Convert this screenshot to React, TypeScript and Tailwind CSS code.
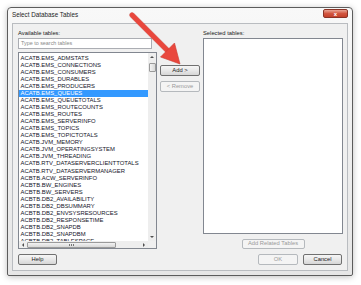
import React from "react";

const tables = [
  "ACATB.EMS_ADMSTATS",
  "ACATB.EMS_CONNECTIONS",
  "ACATB.EMS_CONSUMERS",
  "ACATB.EMS_DURABLES",
  "ACATB.EMS_PRODUCERS",
  "ACATB.EMS_QUEUES",
  "ACATB.EMS_QUEUETOTALS",
  "ACATB.EMS_ROUTECOUNTS",
  "ACATB.EMS_ROUTES",
  "ACATB.EMS_SERVERINFO",
  "ACATB.EMS_TOPICS",
  "ACATB.EMS_TOPICTOTALS",
  "ACATB.JVM_MEMORY",
  "ACATB.JVM_OPERATINGSYSTEM",
  "ACATB.JVM_THREADING",
  "ACATB.RTV_DATASERVERCLIENTTOTALS",
  "ACATB.RTV_DATASERVERMANAGER",
  "ACBTB.ACW_SERVERINFO",
  "ACBTB.BW_ENGINES",
  "ACBTB.BW_SERVERS",
  "ACBTB.DB2_AVAILABILITY",
  "ACBTB.DB2_DBSUMMARY",
  "ACBTB.DB2_ENVSYSRESOURCES",
  "ACBTB.DB2_RESPONSETIME",
  "ACBTB.DB2_SNAPDB",
  "ACBTB.DB2_SNAPDBM",
  "ACBTB.DB2_TABLESPACE",
];

const font = { fontFamily: '"Liberation Sans", Arial, sans-serif' };

function WinButton({
  label,
  disabled = false,
  className = "",
}: {
  label: string;
  disabled?: boolean;
  className?: string;
}) {
  return (
    <div
      className={`flex items-center justify-center rounded-[2px] border text-[5.8px] leading-none ${
        disabled
          ? "border-[#b5b9bd] bg-[#f4f4f4] text-[#9a9a9a]"
          : "border-[#707070] bg-gradient-to-b from-[#f6f6f6] via-[#e8e8e8] to-[#d6d6d6] text-[#1a1a1a]"
      } ${className}`}
    >
      {label}
    </div>
  );
}

function TableList() {
  return (
    <div className="mt-[3px] flex h-[197px] flex-col border border-[#828790] bg-white">
      <div className="flex min-h-0 flex-1">
        {/* rows */}
        <div className="flex-1 overflow-hidden pt-[1.5px]">
          {tables.map((t) => (
            <div
              key={t}
              className={`h-[7.07px] whitespace-nowrap pl-[1.5px] text-[5.9px] leading-[7.07px] ${
                t === "ACATB.EMS_QUEUES" ? "bg-[#3399ff] text-white" : "text-[#14142a]"
              }`}
            >
              {t}
            </div>
          ))}
        </div>
        {/* vertical scrollbar */}
        <div className="flex w-[8px] flex-col bg-[#eeeeee]">
          <div className="flex h-[8px] items-center justify-center">
            <div className="h-0 w-0 border-x-[2px] border-b-[2px] border-x-transparent border-b-[#505050]" />
          </div>
          <div className="mx-[0.5px] mt-[2px] h-[9px] rounded-[1px] border border-[#9a9a9a] bg-gradient-to-r from-[#f3f3f3] to-[#d8d8d8]" />
          <div className="flex-1" />
          <div className="flex h-[8px] items-center justify-center">
            <div className="h-0 w-0 border-x-[2px] border-t-[2px] border-x-transparent border-t-[#505050]" />
          </div>
        </div>
      </div>
      {/* horizontal scrollbar */}
      <div className="flex h-[7px]">
        <div className="flex flex-1 items-center bg-[#eeeeee]">
          <div className="flex w-[8px] items-center justify-center">
            <div className="h-0 w-0 border-y-[2px] border-r-[2px] border-y-transparent border-r-[#505050]" />
          </div>
          <div className="relative flex h-[6px] w-[89px] items-center justify-center rounded-[1px] border border-[#9a9a9a] bg-gradient-to-b from-[#f3f3f3] to-[#d8d8d8]">
            <div className="flex gap-[1px]">
              <div className="h-[2px] w-[1px] bg-[#777]" />
              <div className="h-[2px] w-[1px] bg-[#777]" />
              <div className="h-[2px] w-[1px] bg-[#777]" />
            </div>
          </div>
          <div className="flex-1" />
          <div className="flex w-[8px] items-center justify-center">
            <div className="h-0 w-0 border-y-[2px] border-l-[2px] border-y-transparent border-l-[#505050]" />
          </div>
        </div>
        <div className="w-[8px] bg-[#f0f0f0]" />
      </div>
    </div>
  );
}

export default function App() {
  return (
    <div className="relative h-[285px] w-[361px] overflow-hidden bg-white pl-[7px] pt-[7px]" style={font}>
      <div className="flex h-[269px] w-[346px] flex-col rounded-t-[4px] rounded-b-[2px] border border-[#5c5c5c] bg-gradient-to-b from-[#f8f8f8] to-[#e6e6e6] shadow-[0_1px_6px_rgba(0,0,0,0.25)]">
        {/* title bar */}
        <div className="flex h-[15px] items-start pl-[4px] pr-[4px]">
          <div className="mt-[4px] text-[6.3px] leading-none text-[#1e1e1e]">Select Database Tables</div>
          <div className="flex-1" />
          <div className="mt-[1px] flex h-[9px] w-[25px] items-center justify-center rounded-[2px] border border-[#8a3326] bg-gradient-to-b from-[#e8a495] via-[#d2553f] to-[#c4402a] text-[6px] font-bold leading-none text-white">
            x
          </div>
        </div>

        {/* client area */}
        <div className="mx-[4px] mb-[4px] flex flex-1 flex-col border border-[#b9bcc0] bg-[#f0f0f0] pl-[5px] pt-[6px]">
          <div className="flex items-start">
            {/* left column */}
            <div className="flex w-[139px] flex-col">
              <div className="h-[7px] text-[5.8px] leading-[7px] text-[#1a1a1a]">Available tables:</div>
              <div className="mt-[1px] flex h-[11px] w-[134px] items-center border border-[#abadb3] bg-white pl-[2px] text-[5.4px] text-[#8a8a8a]">
                Type to search tables
              </div>
              <TableList />
            </div>

            {/* middle buttons */}
            <div className="ml-[3px] flex w-[40px] flex-col pt-[35px]">
              <WinButton label="Add >" className="h-[11px]" />
              <WinButton label="< Remove" disabled className="mt-[5px] h-[11px]" />
            </div>

            {/* right column */}
            <div className="ml-[3px] flex w-[140px] flex-col items-center">
              <div className="h-[7px] self-start text-[5.8px] leading-[7px] text-[#1a1a1a]">Selected tables:</div>
              <div className="mt-[1px] h-[196px] w-full border border-[#828790] bg-white" />
              <WinButton label="Add Related Tables" disabled className="mt-[5px] h-[10px] w-[63px]" />
            </div>
          </div>

          {/* bottom buttons */}
          <div className="mt-[5px] flex items-start">
            <WinButton label="Help" className="h-[11px] w-[39px]" />
            <div className="flex-1" />
            <WinButton label="OK" disabled className="h-[11px] w-[40px]" />
            <WinButton label="Cancel" className="ml-[5px] h-[11px] w-[39px]" />
            <div className="w-[5px]" />
          </div>
        </div>
      </div>

      {/* red annotation arrow */}
      <svg className="pointer-events-none absolute left-0 top-0" width="361" height="285" viewBox="0 0 361 285">
        <line x1="132" y1="15" x2="168" y2="51" stroke="#b8322a" strokeWidth="5.4" strokeLinecap="round" opacity="0.5" />
        <line x1="132" y1="15" x2="168" y2="51" stroke="#e9473d" strokeWidth="4.6" strokeLinecap="round" />
        <polygon points="180,64 160.5,57 174.5,43" fill="#e9473d" stroke="#c93a31" strokeWidth="0.6" strokeLinejoin="round" />
      </svg>
    </div>
  );
}
